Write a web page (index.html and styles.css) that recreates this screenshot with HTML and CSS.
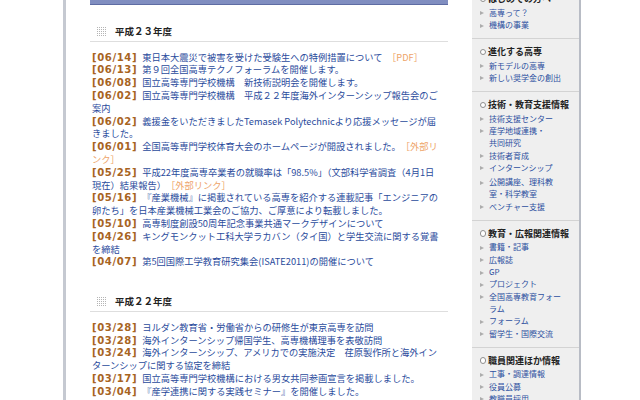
FILE: index.html
```html
<!DOCTYPE html>
<html lang="ja">
<head>
<meta charset="utf-8">
<title>高専機構 お知らせ</title>
<link rel="stylesheet" href="styles.css">
</head>
<body>
<div class="page">
  <main class="main">
    <div class="banner"></div>

    <section class="news">
      <h2 class="year"><svg class="year-icon" width="9" height="9" viewBox="0 0 9 9"><g fill="#b4b4b4"><rect x="0" y="0" width="1" height="1"/><rect x="2" y="0" width="1" height="1"/><rect x="4" y="0" width="1" height="1"/><rect x="6" y="0" width="1" height="1"/><rect x="8" y="0" width="1" height="1"/><rect x="0" y="2" width="1" height="1"/><rect x="2" y="2" width="1" height="1"/><rect x="4" y="2" width="1" height="1"/><rect x="6" y="2" width="1" height="1"/><rect x="8" y="2" width="1" height="1"/><rect x="0" y="4" width="1" height="1"/><rect x="2" y="4" width="1" height="1"/><rect x="4" y="4" width="1" height="1"/><rect x="6" y="4" width="1" height="1"/><rect x="8" y="4" width="1" height="1"/><rect x="0" y="6" width="1" height="1"/><rect x="2" y="6" width="1" height="1"/><rect x="4" y="6" width="1" height="1"/><rect x="6" y="6" width="1" height="1"/><rect x="8" y="6" width="1" height="1"/><rect x="0" y="8" width="1" height="1"/><rect x="2" y="8" width="1" height="1"/><rect x="4" y="8" width="1" height="1"/><rect x="6" y="8" width="1" height="1"/><rect x="8" y="8" width="1" height="1"/></g></svg><span>平成２３年度</span></h2>
      <ul class="news-list">
        <li><span class="date">[06/14]</span><a href="#">東日本大震災で被害を受けた受験生への特例措置について</a>　<a class="ext" href="#">［PDF］</a></li>
        <li><span class="date">[06/13]</span><a href="#">第９回全国高専テクノフォーラムを開催します。</a></li>
        <li><span class="date">[06/08]</span><a href="#">国立高等専門学校機構　新技術説明会を開催します。</a></li>
        <li><span class="date">[06/02]</span><a href="#">国立高等専門学校機構　平成２２年度海外インターンシップ報告会のご案内</a></li>
        <li><span class="date">[06/02]</span><a href="#">義援金をいただきましたTemasek Polytechnicより応援メッセージが届きました。</a></li>
        <li><span class="date">[06/01]</span><a href="#">全国高等専門学校体育大会のホームページが開設されました。</a>　<a class="ext" href="#">［外部リンク］</a></li>
        <li><span class="date">[05/25]</span><a href="#">平成22年度高専卒業者の就職率は「98.5%」（文部科学省調査（4月1日現在）結果報告）</a>　<a class="ext" href="#">［外部リンク］</a></li>
        <li><span class="date">[05/16]</span><a href="#">『産業機械』に掲載されている高専を紹介する連載記事「エンジニアの卵たち」を日本産業機械工業会のご協力、ご厚意により転載しました。</a></li>
        <li><span class="date">[05/10]</span><a href="#">高専制度創設50周年記念事業共通マークデザインについて</a></li>
        <li><span class="date">[04/26]</span><a href="#">キングモンクット工科大学ラカバン（タイ国）と学生交流に関する覚書を締結</a></li>
        <li><span class="date">[04/07]</span><a href="#">第5回国際工学教育研究集会(ISATE2011)の開催について</a></li>
      </ul>
    </section>

    <section class="news">
      <h2 class="year"><svg class="year-icon" width="9" height="9" viewBox="0 0 9 9"><g fill="#b4b4b4"><rect x="0" y="0" width="1" height="1"/><rect x="2" y="0" width="1" height="1"/><rect x="4" y="0" width="1" height="1"/><rect x="6" y="0" width="1" height="1"/><rect x="8" y="0" width="1" height="1"/><rect x="0" y="2" width="1" height="1"/><rect x="2" y="2" width="1" height="1"/><rect x="4" y="2" width="1" height="1"/><rect x="6" y="2" width="1" height="1"/><rect x="8" y="2" width="1" height="1"/><rect x="0" y="4" width="1" height="1"/><rect x="2" y="4" width="1" height="1"/><rect x="4" y="4" width="1" height="1"/><rect x="6" y="4" width="1" height="1"/><rect x="8" y="4" width="1" height="1"/><rect x="0" y="6" width="1" height="1"/><rect x="2" y="6" width="1" height="1"/><rect x="4" y="6" width="1" height="1"/><rect x="6" y="6" width="1" height="1"/><rect x="8" y="6" width="1" height="1"/><rect x="0" y="8" width="1" height="1"/><rect x="2" y="8" width="1" height="1"/><rect x="4" y="8" width="1" height="1"/><rect x="6" y="8" width="1" height="1"/><rect x="8" y="8" width="1" height="1"/></g></svg><span>平成２２年度</span></h2>
      <ul class="news-list">
        <li><span class="date">[03/28]</span><a href="#">ヨルダン教育省・労働省からの研修生が東京高専を訪問</a></li>
        <li><span class="date">[03/28]</span><a href="#">海外インターンシップ帰国学生、高専機構理事を表敬訪問</a></li>
        <li><span class="date">[03/24]</span><a href="#">海外インターンシップ、アメリカでの実施決定　荏原製作所と海外インターンシップに関する協定を締結</a></li>
        <li><span class="date">[03/17]</span><a href="#">国立高等専門学校機構における男女共同参画宣言を掲載しました。</a></li>
        <li><span class="date">[03/04]</span><a href="#">『産学連携に関する実践セミナー』を開催しました。</a></li>
        <li><span class="date">[03/03]</span><a href="#">『高専・ドイツ・インターンシップ説明会』を開催</a></li>
      </ul>
    </section>
  </main>

  <aside class="side">
    <section class="side-sec">
      <h3 class="side-title">はじめての方へ</h3>
      <ul class="side-list">
        <li><a href="#">高専って？</a></li>
        <li><a href="#">機構の事業</a></li>
      </ul>
    </section>
    <section class="side-sec">
      <h3 class="side-title">進化する高専</h3>
      <ul class="side-list">
        <li><a href="#">新モデルの高専</a></li>
        <li><a href="#">新しい奨学金の創出</a></li>
      </ul>
    </section>
    <section class="side-sec">
      <h3 class="side-title">技術・教育支援情報</h3>
      <ul class="side-list">
        <li><a href="#">技術支援センター</a></li>
        <li><a href="#">産学地域連携・<br>共同研究</a></li>
        <li><a href="#">技術者育成</a></li>
        <li><a href="#">インターンシップ</a></li>
        <li class="gap"><a href="#">公開講座、理科教室・科学教室</a></li>
        <li><a href="#">ベンチャー支援</a></li>
      </ul>
    </section>
    <section class="side-sec">
      <h3 class="side-title">教育・広報関連情報</h3>
      <ul class="side-list">
        <li><a href="#">書籍・記事</a></li>
        <li><a href="#">広報誌</a></li>
        <li><a href="#">GP</a></li>
        <li><a href="#">プロジェクト</a></li>
        <li><a href="#">全国高専教育フォーラム</a></li>
        <li><a href="#">フォーラム</a></li>
        <li><a href="#">留学生・国際交流</a></li>
      </ul>
    </section>
    <section class="side-sec">
      <h3 class="side-title">職員関連ほか情報</h3>
      <ul class="side-list">
        <li><a href="#">工事・調達情報</a></li>
        <li><a href="#">役員公募</a></li>
        <li><a href="#">教職員採用</a></li>
        <li><a href="#">情報公開</a></li>
      </ul>
    </section>
  </aside>
</div>
</body>
</html>
```

FILE: styles.css
```css
html, body {
  margin: 0;
  padding: 0;
  height: 400px;
  overflow: hidden;
  background: #ffffff;
}

body {
  font-family: "Noto Sans CJK JP", "Noto Sans", sans-serif;
  color: #333333;
}

a {
  text-decoration: none;
  color: #2a4b9c;
}

.page {
  display: flex;
  align-items: stretch;
  margin-left: 63px;
  width: 515px;
  height: 400px;
  border-left: 3px solid #c5c9d1;
}

.main {
  width: 358px;
  padding-left: 24px;
  margin-right: 24px;
}

.banner {
  height: 4px;
  background-color: #7584ba;
  background-image: radial-gradient(circle, #8d99c7 0.6px, transparent 0.8px);
  background-size: 2px 2px;
  border-bottom: 1px solid #5e6ca3;
}

.year {
  display: flex;
  align-items: center;
  margin: 19px 0 0;
  padding: 0 0 3px 7px;
  font-size: 9.5px;
  line-height: 14px;
  font-weight: bold;
  color: #222222;
  border-bottom: 1px solid #dedede;
}

.year-icon {
  display: block;
  margin-right: 9px;
}

.news + .news {
  margin-top: 26px;
}

.news-list {
  list-style: none;
  margin: 8.6px 0 0;
  padding: 0 0 0 2px;
  width: 350px;
  font-size: 9.25px;
  line-height: 12.8px;
}

.news-list li {
  line-height: 12.8px;
}

.date {
  font-family: "DejaVu Sans", sans-serif;
  font-weight: bold;
  font-size: 10.1px;
  line-height: 9px;
  letter-spacing: 0.6px;
  color: #a8641f;
  margin-right: 5px;
}

.ext {
  color: #eea469;
}

.side {
  width: 107px;
  background: #efefef;
  border-right: 2px solid #b8bcc5;
  overflow: hidden;
}

.side-sec {
  padding: 6px 0 7px;
}

.side-sec:first-child {
  margin-top: -13.7px;
}

.side-sec + .side-sec {
  border-top: 1px solid #d3d3d3;
}

.side-title {
  display: flex;
  align-items: center;
  margin: 0;
  padding-left: 7.5px;
  font-size: 9px;
  line-height: 13px;
  font-weight: bold;
  color: #222222;
  white-space: nowrap;
}

.side-title::before {
  content: "";
  width: 4.4px;
  height: 4.4px;
  border: 1.6px solid #8e8e8e;
  border-radius: 50%;
  background: #ffffff;
  margin-right: 2px;
}

.side-list {
  list-style: none;
  margin: 1.4px 0 0;
  padding: 0 15px 0 17px;
  font-size: 8px;
  line-height: 12.3px;
}

.side-list li::before {
  content: "";
  display: inline-block;
  margin-left: -9px;
  margin-right: 5px;
  border-left: 4px solid #adadad;
  border-top: 2.5px solid transparent;
  border-bottom: 2.5px solid transparent;
  vertical-align: 0.5px;
}

.side-list a {
  color: #2d4f9f;
}

.side-list .gap {
  margin-top: 2px;
}
```
